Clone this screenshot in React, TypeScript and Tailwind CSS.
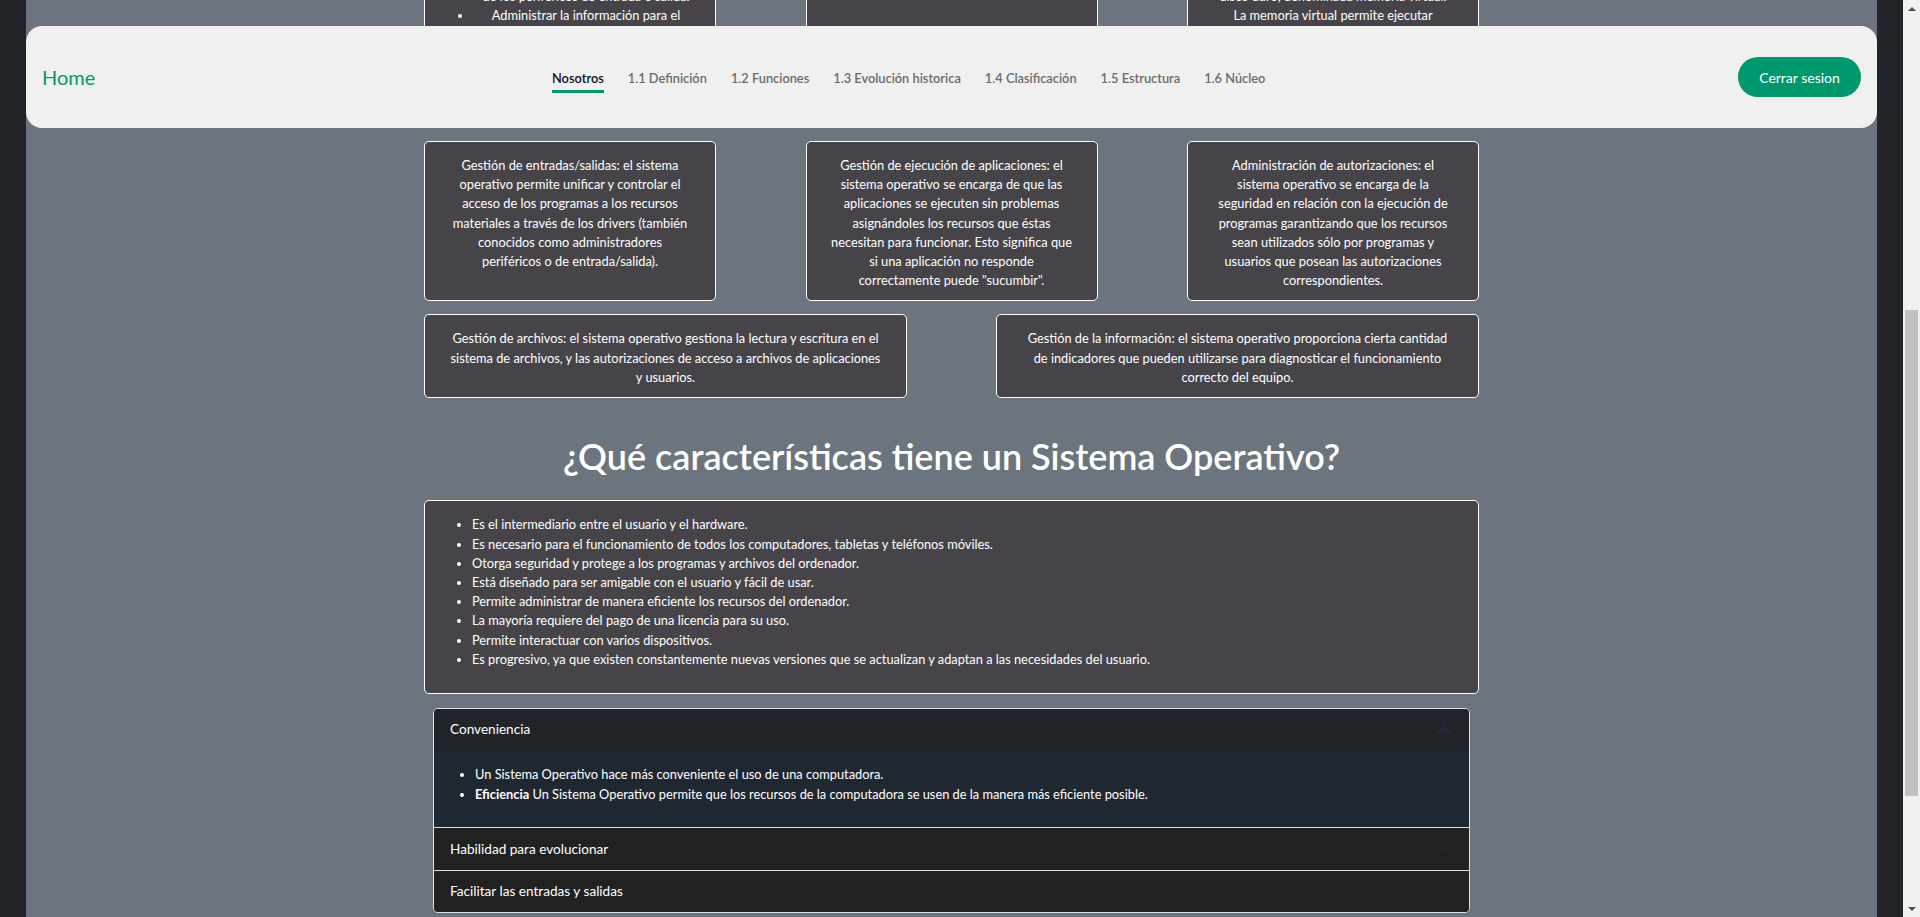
import React from "react";

const navLinks = [
  "Nosotros",
  "1.1 Definición",
  "1.2 Funciones",
  "1.3 Evolución historica",
  "1.4 Clasificación",
  "1.5 Estructura",
  "1.6 Núcleo",
];

const middleCards = [
  "Gestión de entradas/salidas: el sistema operativo permite unificar y controlar el acceso de los programas a los recursos materiales a través de los drivers (también conocidos como administradores periféricos o de entrada/salida).",
  'Gestión de ejecución de aplicaciones: el sistema operativo se encarga de que las aplicaciones se ejecuten sin problemas asignándoles los recursos que éstas necesitan para funcionar. Esto significa que si una aplicación no responde correctamente puede "sucumbir".',
  "Administración de autorizaciones: el sistema operativo se encarga de la seguridad en relación con la ejecución de programas garantizando que los recursos sean utilizados sólo por programas y usuarios que posean las autorizaciones correspondientes.",
];

const wideCards = [
  "Gestión de archivos: el sistema operativo gestiona la lectura y escritura en el sistema de archivos, y las autorizaciones de acceso a archivos de aplicaciones y usuarios.",
  "Gestión de la información: el sistema operativo proporciona cierta cantidad de indicadores que pueden utilizarse para diagnosticar el funcionamiento correcto del equipo.",
];

const caracteristicas = [
  "Es el intermediario entre el usuario y el hardware.",
  "Es necesario para el funcionamiento de todos los computadores, tabletas y teléfonos móviles.",
  "Otorga seguridad y protege a los programas y archivos del ordenador.",
  "Está diseñado para ser amigable con el usuario y fácil de usar.",
  "Permite administrar de manera eficiente los recursos del ordenador.",
  "La mayoría requiere del pago de una licencia para su uso.",
  "Permite interactuar con varios dispositivos.",
  "Es progresivo, ya que existen constantemente nuevas versiones que se actualizan y adaptan a las necesidades del usuario.",
];

const card =
  "rounded-[5px] border border-white bg-[#464449] text-center text-[12.8px] leading-[19.2px] text-white";

const Chevron = ({ up, color }: { up?: boolean; color: string }) => (
  <svg
    viewBox="0 0 16 16"
    className={up ? "h-[16px] w-[16px] rotate-180" : "h-[16px] w-[16px]"}
    fill={color}
  >
    <path
      fillRule="evenodd"
      d="M1.646 4.646a.5.5 0 0 1 .708 0L8 10.293l5.646-5.647a.5.5 0 0 1 .708.708l-6 6a.5.5 0 0 1-.708 0l-6-6a.5.5 0 0 1 0-.708z"
    />
  </svg>
);

const Navbar = () => (
  <nav className="absolute left-[26px] right-[26px] top-[26px] z-10 flex h-[102px] items-center rounded-2xl bg-[#f0f0f0] px-4">
    <a className="w-[504px] text-[20px] leading-[30px] text-[#00996d]">Home</a>
    <ul className="flex gap-[12px]">
      {navLinks.map((link, i) => (
        <li key={link} className="flex flex-col items-center px-[6px] pt-[6px]">
          <span
            className={
              i === 0
                ? "text-[12.8px] font-semibold leading-[20px] text-[#111]"
                : "text-[12.8px] font-semibold leading-[20px] text-[#6b6b6b]"
            }
          >
            {link}
          </span>
          <span
            className={
              i === 0
                ? "mt-[2px] h-[3px] w-full bg-[#00996d]"
                : "mt-[2px] h-[3px] w-full"
            }
          />
        </li>
      ))}
    </ul>
    <button className="ml-auto h-[40px] w-[123px] rounded-full bg-[#00996d] text-[14px] text-white">
      Cerrar sesion
    </button>
  </nav>
);

const Scrollbar = () => (
  <div className="flex w-[17px] flex-col bg-[#f1f1f1]">
    <div className="flex h-[17px] items-center justify-center">
      <div className="h-0 w-0 border-x-[4px] border-b-[4px] border-x-transparent border-b-[#505050]" />
    </div>
    <div className="flex-1 px-[2px]">
      <div className="mt-[293px] h-[486px] bg-[#c1c1c1]" />
    </div>
    <div className="flex h-[17px] items-center justify-center">
      <div className="h-0 w-0 border-x-[4px] border-t-[4px] border-x-transparent border-t-[#505050]" />
    </div>
  </div>
);

export default function App() {
  return (
    <div className="flex h-[917px] w-full overflow-hidden bg-[#212529] font-[Lato,sans-serif]">
      <div className="relative flex-1 overflow-hidden px-[26px]">
        <div className="h-full overflow-hidden bg-[#6c757d]">
          <Navbar />
          <main className="mx-auto w-[1055px]">
            <div className="-mt-[60px] grid h-[188px] grid-cols-[292px_292px_292px] justify-between">
              <div className={card}>
                <ul className="list-disc pl-[48px] pr-[16px] pt-[27px]">
                  <li>
                    Gestionar el acceso a los recursos
                    <br />
                    de los periféricos de entrada o salida.
                  </li>
                  <li>Administrar la información para el correcto uso del sistema.</li>
                </ul>
              </div>
              <div className={card}>
                <p className="px-[16px] pt-[8px]">
                  para llevar a cabo las tareas solicitadas
                  <br />
                  por el usuario.
                </p>
              </div>
              <div className={card}>
                <p className="px-[16px] pt-[27px]">
                  puede crear una zona de memoria en el
                  <br />
                  disco duro, denominada memoria virtual.
                  <br />
                  La memoria virtual permite ejecutar
                  <br />
                  aplicaciones que requieren una memoria
                  <br />
                  superior a la memoria RAM disponible.
                </p>
              </div>
            </div>

            <div className="mt-[13px] grid grid-cols-[292px_292px_292px] justify-between">
              {middleCards.map((text) => (
                <div key={text} className={`${card} px-[24px] pb-[10px] pt-[14px]`}>
                  {text}
                </div>
              ))}
            </div>

            <div className="mt-[13px] grid grid-cols-[483px_483px] justify-between">
              {wideCards.map((text) => (
                <div key={text} className={`${card} px-[24px] pb-[10px] pt-[14px]`}>
                  {text}
                </div>
              ))}
            </div>

            <h2 className="mb-[25px] mt-[39px] text-center text-[36px] font-semibold leading-[38.4px] text-white">
              ¿Qué características tiene un Sistema Operativo?
            </h2>

            <div className="rounded-[5px] border border-white bg-[#464449] pb-[24px] pl-[15px] pt-[14px] text-[12.8px] leading-[19.2px] text-white">
              <ul className="list-disc pl-[32px]">
                {caracteristicas.map((item) => (
                  <li key={item}>{item}</li>
                ))}
              </ul>
            </div>

            <div className="mx-[9px] mt-[14px] overflow-hidden rounded-[5px] border border-[#dee2e6] text-white">
              <div className="flex h-[41px] items-center justify-between bg-[#212529] pl-[16px] pr-[17px] text-[13.6px]">
                <span>Conveniencia</span>
                <Chevron up color="#0c3c78" />
              </div>
              <div className="bg-[#1f2731] pb-[23px] pl-[9px] pt-[14px] text-[12.8px] leading-[20px]">
                <ul className="list-disc pl-[32px]">
                  <li>Un Sistema Operativo hace más conveniente el uso de una computadora.</li>
                  <li>
                    <strong>Eficiencia</strong> Un Sistema Operativo permite que los recursos de la
                    computadora se usen de la manera más eficiente posible.
                  </li>
                </ul>
              </div>
              <div className="flex h-[43px] items-center justify-between border-t border-[#dee2e6] bg-[#212121] pl-[16px] pr-[17px] text-[13.6px]">
                <span>Habilidad para evolucionar</span>
                <Chevron color="#27292d" />
              </div>
              <div className="flex h-[42px] items-center justify-between border-t border-[#dee2e6] bg-[#212121] pl-[16px] pr-[17px] text-[13.6px]">
                <span>Facilitar las entradas y salidas</span>
                <Chevron color="#27292d" />
              </div>
            </div>
          </main>
        </div>
      </div>
      <Scrollbar />
    </div>
  );
}
